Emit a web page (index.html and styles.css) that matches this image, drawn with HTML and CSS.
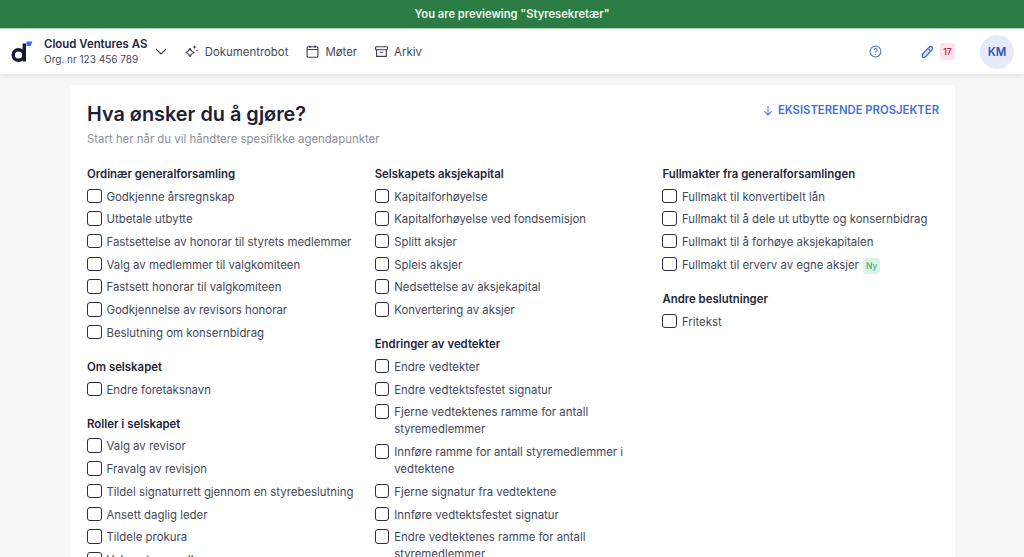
FILE: index.html
```html
<!DOCTYPE html>
<html lang="no">
<head>
<meta charset="utf-8">
<title>Hva ønsker du å gjøre?</title>
<link rel="stylesheet" href="styles.css">
</head>
<body>
<div class="banner">You are previewing "Styresekretær"</div>
<header class="nav">
  <svg class="logo" viewBox="0 0 22 21" width="22" height="21"><circle cx="7.500" cy="14" r="5.300" fill="none" stroke="#171a33" stroke-width="3.400"/><path d="M13.300 2.500V20.500" stroke="#171a33" stroke-width="3.400" fill="none"/><path d="M15.500 .5h6l-2 4.500h-4z" fill="#2f6fed"/></svg>
  <div class="org">
    <div class="org-name">Cloud Ventures AS</div>
    <div class="org-nr">Org. nr 123 456 789</div>
  </div>
  <svg class="chev" viewBox="0 0 12 7" width="12" height="7"><path d="M1 1l5 5 5-5" fill="none" stroke="#3a3d50" stroke-width="1.100"/></svg>
  <nav class="menu">
    <a class="menu-item"><svg viewBox="0 0 15 15" width="15" height="15"><path d="M6 4.500c.7 1.900 2 3.300 4 4-2 .7-3.300 2-4 4-.7-2-2-3.300-4-4 2-.7 3.300-2.100 4-4z" fill="none" stroke="#3a3d50" stroke-width="1.300" stroke-linejoin="round"/><path d="M10.500 1.200c.3 1 .9 1.600 1.800 1.800-.9.300-1.500.9-1.800 1.800-.3-.9-.9-1.500-1.800-1.800.9-.2 1.500-.8 1.800-1.800z" fill="#3a3d50"/><circle cx="13" cy="6.500" r=".8" fill="#3a3d50"/></svg>Dokumentrobot</a>
    <a class="menu-item"><svg viewBox="0 0 13 13" width="13" height="13"><rect x="1.100" y="1.800" width="10.800" height="10.500" rx="1.200" fill="none" stroke="#3a3d50" stroke-width="1.100"/><path d="M1.100 4.500h10.800M4 .5v2.500M9 .5v2.500" stroke="#3a3d50" stroke-width="1.100"/></svg>Møter</a>
    <a class="menu-item"><svg viewBox="0 0 13 13" width="13" height="13"><rect x=".6" y="1.800" width="11.800" height="2.900" rx=".6" fill="none" stroke="#3a3d50" stroke-width="1.100"/><path d="M1.600 4.700v6.700h9.800V4.700M4.800 7.200h3.400" fill="none" stroke="#3a3d50" stroke-width="1.100"/></svg>Arkiv</a>
  </nav>
  <div class="actions">
    <svg class="help" viewBox="0 0 14 14" width="13" height="13"><circle cx="7" cy="7" r="5.800" fill="none" stroke="#4f74bd" stroke-width="1.100"/><path d="M5.300 5.500c0-2.200 3.500-2.200 3.500 0 0 1.400-1.800 1.300-1.800 2.700" fill="none" stroke="#4f74bd" stroke-width="1.100"/><circle cx="7" cy="10" r=".7" fill="#4f74bd"/></svg>
    <svg class="pen" viewBox="0 0 14 15" width="13" height="14"><path d="M2.300 9.200L8.800 2.300a1.900 1.900 0 0 1 3 2.700L5.300 12.100c-1.200 1-3 1.200-3.700 1-.2-.9.100-2.800.7-3.900z" fill="#dfe7f7" stroke="#4f74bd" stroke-width="1.500" stroke-linejoin="round"/><path d="M7.500 3.800l3.200 3" stroke="#4f74bd" stroke-width="1.300"/></svg>
    <span class="count">17</span>
    <span class="avatar">KM</span>
  </div>
</header>
<main class="card">
  <div class="head">
    <h1 class="title">Hva ønsker du å gjøre?</h1>
    <a class="existing"><svg viewBox="0 0 10 12" width="10" height="11"><path d="M5 1v10M1 7l4 4 4-4" fill="none" stroke="#3f72d9" stroke-width="1.100"/></svg>EKSISTERENDE PROSJEKTER</a>
  </div>
  <p class="sub">Start her når du vil håndtere spesifikke agendapunkter</p>
  <div class="cols">
    <div class="col">
      <section class="group">
        <h2 class="group-title">Ordinær generalforsamling</h2>
        <label class="opt"><span class="box"></span>Godkjenne årsregnskap</label>
        <label class="opt"><span class="box"></span>Utbetale utbytte</label>
        <label class="opt"><span class="box"></span>Fastsettelse av honorar til styrets medlemmer</label>
        <label class="opt"><span class="box"></span>Valg av medlemmer til valgkomiteen</label>
        <label class="opt"><span class="box"></span>Fastsett honorar til valgkomiteen</label>
        <label class="opt"><span class="box"></span>Godkjennelse av revisors honorar</label>
        <label class="opt"><span class="box"></span>Beslutning om konsernbidrag</label>
      </section>
      <section class="group">
        <h2 class="group-title">Om selskapet</h2>
        <label class="opt"><span class="box"></span>Endre foretaksnavn</label>
      </section>
      <section class="group">
        <h2 class="group-title">Roller i selskapet</h2>
        <label class="opt"><span class="box"></span>Valg av revisor</label>
        <label class="opt"><span class="box"></span>Fravalg av revisjon</label>
        <label class="opt"><span class="box"></span>Tildel signaturrett gjennom en styrebeslutning</label>
        <label class="opt"><span class="box"></span>Ansett daglig leder</label>
        <label class="opt"><span class="box"></span>Tildele prokura</label>
        <label class="opt"><span class="box"></span>Velge styremedlemmer</label>
      </section>
    </div>
    <div class="col">
      <section class="group">
        <h2 class="group-title">Selskapets aksjekapital</h2>
        <label class="opt"><span class="box"></span>Kapitalforhøyelse</label>
        <label class="opt"><span class="box"></span>Kapitalforhøyelse ved fondsemisjon</label>
        <label class="opt"><span class="box"></span>Splitt aksjer</label>
        <label class="opt"><span class="box"></span>Spleis aksjer</label>
        <label class="opt"><span class="box"></span>Nedsettelse av aksjekapital</label>
        <label class="opt"><span class="box"></span>Konvertering av aksjer</label>
      </section>
      <section class="group">
        <h2 class="group-title">Endringer av vedtekter</h2>
        <label class="opt"><span class="box"></span>Endre vedtekter</label>
        <label class="opt"><span class="box"></span>Endre vedtektsfestet signatur</label>
        <label class="opt"><span class="box"></span>Fjerne vedtektenes ramme for antall styremedlemmer</label>
        <label class="opt"><span class="box"></span>Innføre ramme for antall styremedlemmer i vedtektene</label>
        <label class="opt"><span class="box"></span>Fjerne signatur fra vedtektene</label>
        <label class="opt"><span class="box"></span>Innføre vedtektsfestet signatur</label>
        <label class="opt"><span class="box"></span>Endre vedtektenes ramme for antall styremedlemmer</label>
      </section>
    </div>
    <div class="col">
      <section class="group">
        <h2 class="group-title">Fullmakter fra generalforsamlingen</h2>
        <label class="opt"><span class="box"></span>Fullmakt til konvertibelt lån</label>
        <label class="opt"><span class="box"></span>Fullmakt til å dele ut utbytte og konsernbidrag</label>
        <label class="opt"><span class="box"></span>Fullmakt til å forhøye aksjekapitalen</label>
        <label class="opt"><span class="box"></span><span>Fullmakt til erverv av egne aksjer <span class="tag">Ny</span></span></label>
      </section>
      <section class="group">
        <h2 class="group-title">Andre beslutninger</h2>
        <label class="opt"><span class="box"></span>Fritekst</label>
      </section>
    </div>
  </div>
</main>
</body>
</html>
```
FILE: styles.css
```css
* { box-sizing: border-box; }
html, body { margin: 0; height: 557px; overflow: hidden; }
body { background: #f7f7f8; font-family: Inter, "Noto Sans", sans-serif; color: #44475a; font-size: 11.4px; }
.banner { height: 28px; background: #2c7d45; color: #eaf4ec; font-weight: 600; font-size: 11.2px; display: flex; align-items: center; justify-content: center; }
.nav { height: 46px; background: #fff; box-shadow: 0 1px 6px rgba(30,30,60,.12); display: flex; align-items: center; padding: 0 10px 0 11px; position: relative; border-top: 1px solid #a9cdb3; }
.logo { margin-right: 11px; }
.org-name { font-weight: 600; color: #23263a; font-size: 11.4px; line-height: 16px; }
.org-nr { font-size: 10px; line-height: 15px; color: #44475a; }
.chev { margin: 0 0 0 8px; }
.menu { display: flex; gap: 18px; margin-left: 16.5px; }
.menu-item { display: flex; align-items: center; gap: 6px; color: #44475a; font-size: 11.4px; }
.actions { margin-left: auto; display: flex; align-items: center; }
.help { margin-right: 39px; }
.pen { margin-right: 6px; }
.count { width: 15px; height: 17px; background: #fde3e8; color: #c8284f; font-size: 8.500px; font-weight: 600; border-radius: 3px; display: flex; align-items: center; justify-content: center; }
.avatar { width: 34px; height: 34px; margin-left: 25px; border-radius: 50%; background: #e6ebfb; color: #2f55b5; font-weight: 600; font-size: 11.4px; display: flex; align-items: center; justify-content: center; }
.card { width: 885px; height: 600px; margin: 11px 0 0 70px; background: #fff; border-radius: 4px; padding: 17px 16px 0 17px; }
.head { display: flex; justify-content: space-between; align-items: flex-start; }
.title { margin: 0; font-size: 19.85px; line-height: 24px; font-weight: 600; color: #1d2036; }
.existing { display: flex; align-items: center; gap: 5px; color: #3f72d9; font-weight: 600; font-size: 11.3px; line-height: 16px; }
.sub { margin: 5px 0 0; color: #8b8e9c; font-size: 11.4px; line-height: 16px; }
.cols { display: grid; grid-template-columns: repeat(3, 276.7px); column-gap: 11px; margin-top: 18.6px; }
.group { margin-bottom: 14px; }
.group-title { margin: 0 0 3.1px; font-size: 11.4px; line-height: 17px; font-weight: 600; color: #23263a; }
.opt { display: flex; align-items: flex-start; gap: 5px; padding: 2.86px 0; line-height: 17px; color: #44475a; }
.box { flex: none; width: 14.5px; height: 14.5px; border: 1.400px solid #2b2e42; border-radius: 3px; }
.tag { display: inline-block; margin-left: 1px; padding: 0 3px; background: #d8f5e8; color: #2f9a6b; font-size: 8.500px; line-height: 16px; border-radius: 3px; vertical-align: middle; }
```
